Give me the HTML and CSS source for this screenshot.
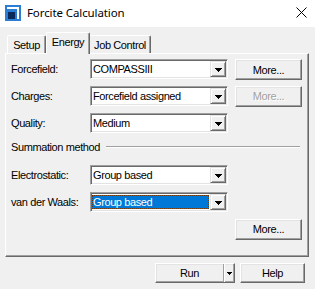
FILE: index.html
```html
<!DOCTYPE html>
<html>
<head>
<meta charset="utf-8">
<link rel="stylesheet" href="styles.css">
</head>
<body>
<div class="titlebar">
  <svg class="app-icon" width="16" height="16" viewBox="0 0 16 16" shape-rendering="crispEdges">
    <rect x="0" y="0" width="16" height="16" fill="#2a7fd4"/>
    <rect x="2" y="2" width="12" height="2" fill="#ffffff"/>
    <rect x="12" y="2" width="2" height="12" fill="#ffffff"/>
    <rect x="3" y="7" width="7" height="7" fill="#0b2a5a"/>
  </svg>
  <span class="title">Forcite Calculation</span>
  <svg class="close" width="11" height="11" viewBox="0 0 11 11">
    <path d="M0.5 0.5L10.5 10.5M10.5 0.5L0.5 10.5" stroke="#000" stroke-width="1"/>
  </svg>
</div>

<div class="tabstrip">
  <div class="tab tab-setup">Setup</div>
  <div class="tab tab-active">Energy</div>
  <div class="tab tab-job">Job Control</div>
</div>

<div class="panel">
  <div class="row">
    <span class="label">Forcefield:</span>
    <div class="combo"><span class="value">COMPASSIII</span><span class="drop"><svg width="7" height="4" viewBox="0 0 7 4" shape-rendering="crispEdges"><path d="M0 0h7v1h-1v1h-1v1h-1v1h-1v-1h-1v-1h-1v-1h-1z" fill="#000"/></svg></span></div>
    <button class="btn more">More...</button>
  </div>
  <div class="row">
    <span class="label">Charges:</span>
    <div class="combo"><span class="value">Forcefield assigned</span><span class="drop"><svg width="7" height="4" viewBox="0 0 7 4" shape-rendering="crispEdges"><path d="M0 0h7v1h-1v1h-1v1h-1v1h-1v-1h-1v-1h-1v-1h-1z" fill="#000"/></svg></span></div>
    <button class="btn more disabled">More...</button>
  </div>
  <div class="row">
    <span class="label">Quality:</span>
    <div class="combo"><span class="value">Medium</span><span class="drop"><svg width="7" height="4" viewBox="0 0 7 4" shape-rendering="crispEdges"><path d="M0 0h7v1h-1v1h-1v1h-1v1h-1v-1h-1v-1h-1v-1h-1z" fill="#000"/></svg></span></div>
  </div>
  <div class="group-title">
    <span>Summation method</span>
    <span class="etch"></span>
  </div>
  <div class="row">
    <span class="label">Electrostatic:</span>
    <div class="combo"><span class="value">Group based</span><span class="drop"><svg width="7" height="4" viewBox="0 0 7 4" shape-rendering="crispEdges"><path d="M0 0h7v1h-1v1h-1v1h-1v1h-1v-1h-1v-1h-1v-1h-1z" fill="#000"/></svg></span></div>
  </div>
  <div class="row">
    <span class="label">van der Waals:</span>
    <div class="combo"><span class="value sel">Group based</span><span class="drop"><svg width="7" height="4" viewBox="0 0 7 4" shape-rendering="crispEdges"><path d="M0 0h7v1h-1v1h-1v1h-1v1h-1v-1h-1v-1h-1v-1h-1z" fill="#000"/></svg></span></div>
  </div>
  <div class="row row-end">
    <button class="btn more">More...</button>
  </div>
</div>

<div class="footer">
  <div class="btn split">
    <span class="split-main">Run</span>
    <span class="split-arrow"><svg width="5" height="3" viewBox="0 0 5 3" shape-rendering="crispEdges"><path d="M0 0h5v1h-1v1h-1v1h-1v-1h-1v-1h-1z" fill="#000"/></svg></span>
  </div>
  <button class="btn help">Help</button>
</div>
</body>
</html>
```
FILE: styles.css
```css
* { box-sizing: border-box; }

body {
  margin: 0;
  width: 315px;
  height: 289px;
  overflow: hidden;
  background: #f0f0f0;
  font-family: "Liberation Sans", Arial, sans-serif;
  font-size: 11px;
  letter-spacing: -0.4px;
  color: #000;
}

.titlebar {
  height: 27px;
  padding: 0 8px 2px 5px;
  background: #fff;
  display: flex;
  align-items: center;
}

.app-icon { flex: none; }

.title {
  margin-left: 6px;
  font-family: "Noto Sans", sans-serif;
  font-size: 11.5px;
  letter-spacing: -0.1px;
  flex: 1;
}

.close { flex: none; }

.tabstrip {
  margin-top: 5px;
  padding-left: 7px;
  height: 21px;
  display: flex;
  align-items: flex-end;
}

.tab {
  height: 18px;
  display: flex;
  align-items: center;
  justify-content: center;
  border-top: 1px solid #fff;
  border-left: 1px solid #fff;
  border-right: 1px solid #696969;
  box-shadow: inset -1px 0 0 #a0a0a0;
  border-radius: 2px 2px 0 0;
  padding-top: 1px;
}

.tab-setup { width: 39px; }
.tab-job { width: 61px; border-left: none; }

.tab-active {
  width: 44px;
  height: 22px;
  margin-bottom: -1px;
  position: relative;
  z-index: 1;
  background: #f0f0f0;
  align-items: flex-start;
  padding-top: 3px;
}

.panel {
  margin: 0 6px 0 5px;
  height: 204px;
  border-top: 1px solid #fff;
  border-left: 1px solid #fff;
  border-right: 1px solid #696969;
  border-bottom: 1px solid #696969;
  box-shadow: inset -1px -1px 0 #a0a0a0;
  padding: 5px 0 0 5px;
}

.row {
  display: flex;
  align-items: center;
  height: 20px;
  margin-bottom: 7px;
}

.label { width: 79px; flex: none; }

.combo {
  width: 138px;
  height: 20px;
  flex: none;
  display: flex;
  align-items: stretch;
  background: #fff;
  border: 1px solid;
  border-color: #a0a0a0 #fff #fff #a0a0a0;
  box-shadow: inset 1px 1px 0 #696969, inset -1px -1px 0 #e3e3e3;
  padding: 1px;
}

.value {
  flex: 1;
  display: flex;
  align-items: center;
  padding-left: 1px;
  white-space: nowrap;
  overflow: hidden;
}

.value.sel {
  background: #0078d7;
  color: #fff;
  outline: 1px dotted #6b3a10;
  outline-offset: -1px;
  margin: 1px 1px 1px 0;
}

.drop {
  width: 16px;
  flex: none;
  display: flex;
  align-items: center;
  justify-content: center;
  background: #f0f0f0;
  border: 1px solid;
  border-color: #e3e3e3 #696969 #696969 #e3e3e3;
  box-shadow: inset 1px 1px 0 #fff, inset -1px -1px 0 #a0a0a0;
  padding-top: 1px;
}

.btn {
  font: inherit;
  letter-spacing: inherit;
  color: #000;
  background: #f0f0f0;
  border: 1px solid;
  border-color: #fff #696969 #696969 #fff;
  box-shadow: inset -1px -1px 0 #a0a0a0, inset 1px 1px 0 #e3e3e3;
  border-radius: 0;
  padding: 0;
  margin: 0;
  display: flex;
  align-items: center;
  justify-content: center;
}

.more {
  width: 67px;
  height: 21px;
  margin-left: 7px;
  flex: none;
}

.row:first-child .more { margin-top: 1px; }

.more.disabled {
  color: #a0a0a0;
  text-shadow: 1px 1px 0 #fff;
}

.row-end { padding-left: 217px; }

.group-title {
  width: 289px;
  height: 14px;
  margin: 7px 0 11px 0;
  display: flex;
  align-items: center;
}

.etch {
  flex: 1;
  margin-left: 6px;
  height: 2px;
  border-top: 1px solid #a0a0a0;
  border-bottom: 1px solid #fff;
}

.footer {
  margin-top: 6px;
  padding-right: 10px;
  display: flex;
  justify-content: flex-end;
  gap: 5px;
}

.split {
  width: 80px;
  height: 20px;
  justify-content: flex-start;
  align-items: stretch;
}

.split-main {
  width: 68px;
  display: flex;
  align-items: center;
  justify-content: center;
  border-right: 1px solid #a0a0a0;
  box-shadow: 1px 0 0 #fff;
}

.split-arrow {
  flex: 1;
  display: flex;
  align-items: center;
  justify-content: center;
  padding-left: 1px;
}

.help {
  width: 65px;
  height: 20px;
}
```
